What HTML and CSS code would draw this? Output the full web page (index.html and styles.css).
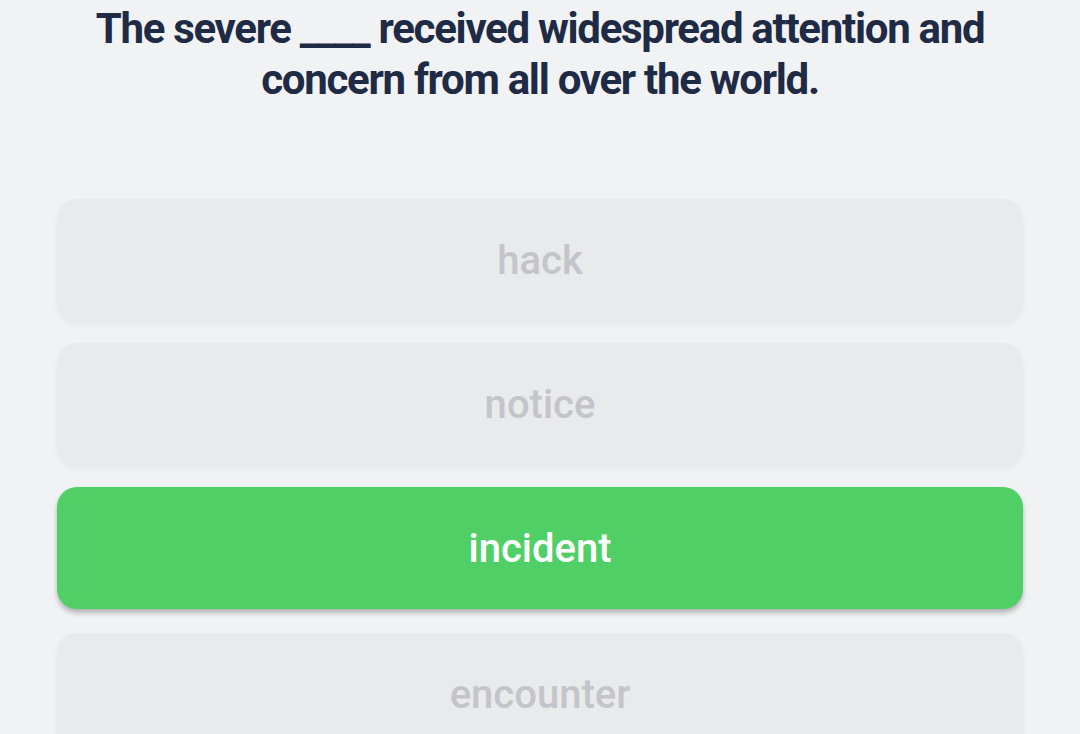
FILE: index.html
```html
<!DOCTYPE html>
<html>
<head>
<meta charset="utf-8">
<link rel="stylesheet" href="styles.css">
</head>
<body>
<main class="quiz">
  <h1 class="question">The severe ____ received widespread attention and concern from all over the world.</h1>
  <div class="options">
    <button class="option">hack</button>
    <button class="option">notice</button>
    <button class="option option--correct">incident</button>
    <button class="option option--last">encounter</button>
  </div>
</main>
</body>
</html>
```
FILE: styles.css
```css
html, body {
  margin: 0;
  padding: 0;
  background: #f1f2f4;
  height: 100%;
  overflow: hidden;
}
.quiz {
  width: 966px;
  margin: 0 auto;
  font-family: Roboto, "Liberation Sans", sans-serif;
}
.question {
  margin: 0;
  padding-top: 3px;
  font-size: 42px;
  line-height: 51px;
  font-weight: 700;
  color: #1f2a44;
  text-align: center;
  letter-spacing: -1.3px;
}
.options {
  margin-top: 94px;
  display: flex;
  flex-direction: column;
  gap: 22px;
}
.option {
  display: block;
  width: 100%;
  height: 122px;
  border: 0;
  border-radius: 20px;
  background: #e9eaec;
  color: #c3c5cb;
  font-family: Roboto, "Liberation Sans", sans-serif;
  font-size: 40px;
  font-weight: 500;
  box-shadow: 0 3px 6px rgba(0, 0, 0, 0.05);
  padding: 0;
}
.option--last {
  margin-top: 2px;
}
.option--correct {
  background: #51cf67;
  color: #ffffff;
  box-shadow: 0 4px 5px rgba(0, 0, 0, 0.25);
}
```
